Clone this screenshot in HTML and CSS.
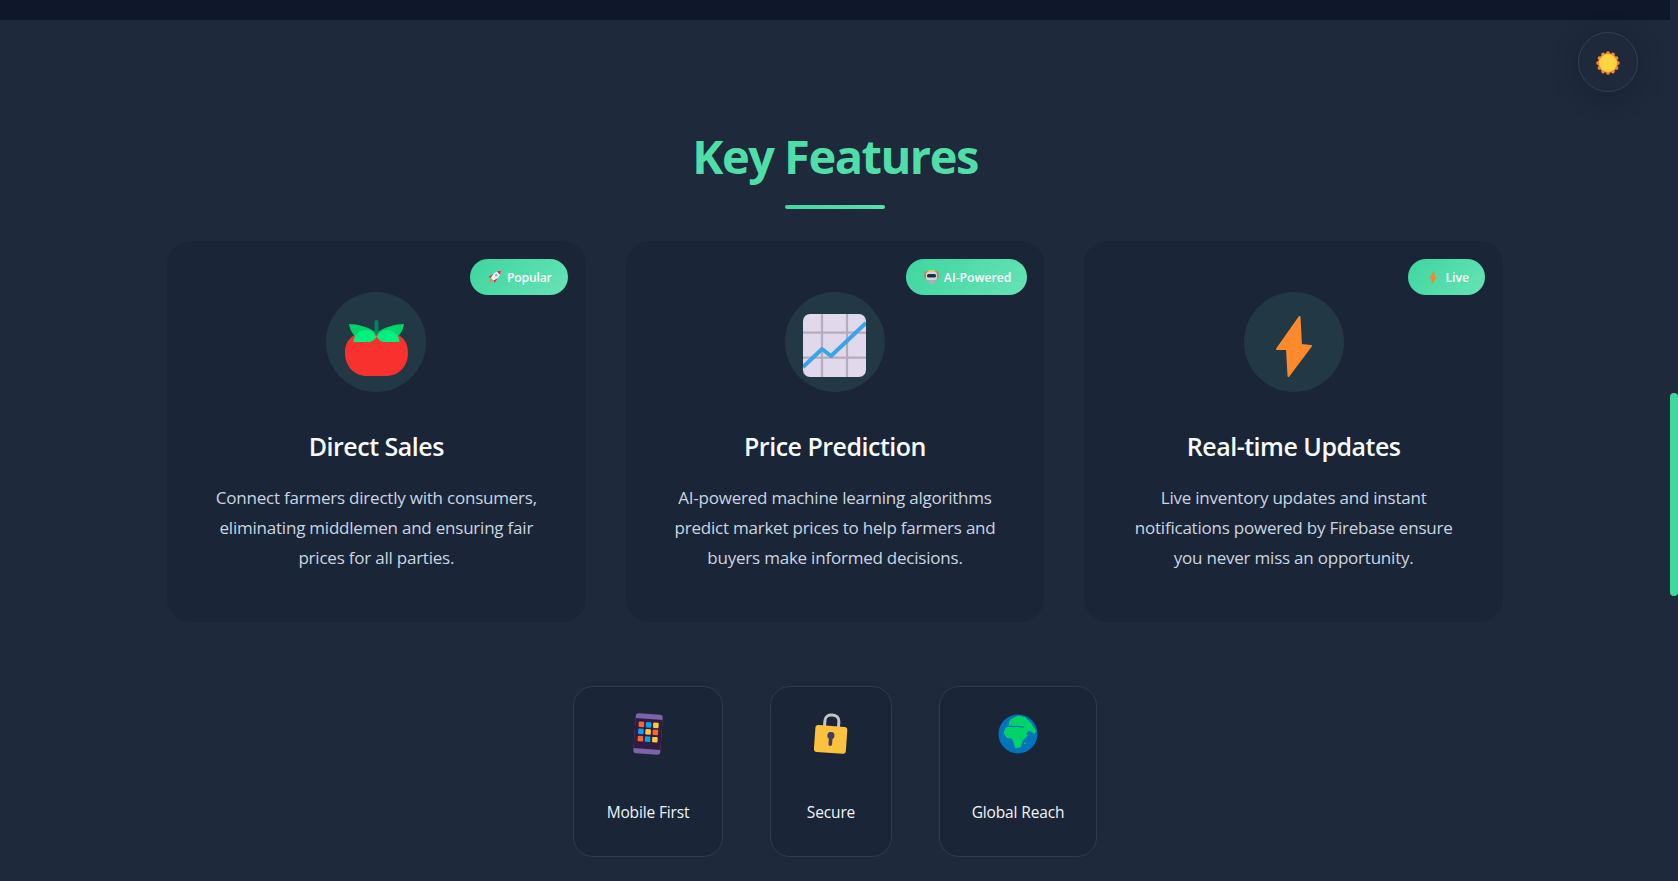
FILE: index.html
```html
<!DOCTYPE html>
<html lang="en">
<head>
<meta charset="utf-8">
<title>Key Features</title>
<link rel="stylesheet" href="styles.css">
</head>
<body>
<div class="topbar"></div>
<main class="features">
  <h2 class="title">Key Features</h2>
  <div class="underline"></div>
  <div class="cards">
    <article class="card">
      <span class="badge badge-pop">
        <svg class="badge-icon" viewBox="0 0 14 14"><path d="M3.500 8.500L0.500 13.500L5.500 10.500Z" fill="#ff822d"/><path d="M1 7L5.500 4L5.500 8.500Z M5.500 8.500L10 8.500L7 13Z" fill="#e0244c"/><path d="M3.500 8C5 4 8 1.200 13.500 0.500C13 6 10 9 6 10.500Z" fill="#f1eff5"/><path d="M9.300 1.400L13.500 0.500L12.600 4.700Z" fill="#e0244c"/><circle cx="8.800" cy="5.200" r="1.300" fill="#7fb3e8"/></svg>
        Popular
      </span>
      <div class="icon-circle">
        <svg class="icon-tomato" viewBox="0 0 67 60">
          <path d="M33.500 15C20 11 2 14 2 34C2 48 12 57 24 57H43C55 57 65 48 65 34C65 14 47 11 33.500 15Z" fill="#f8312f"/>
          <path d="M6 5C14 5 26 8 33.500 14C28 20 20 21 15 19C10 17 7 11 6 5Z" fill="#00d26a"/>
          <path d="M61 5C53 5 41 8 33.500 14C39 20 47 21 52 19C57 17 60 11 61 5Z" fill="#00d26a"/>
          <rect x="31.500" y="1" width="4" height="14" rx="2" fill="#008463"/>
          <path d="M10.300 23C11 16 16 11 23 11C28 11 31 14 33.500 18C31 21 29 23 26 23Z" fill="#00f080"/>
          <path d="M56.700 23C56 16 51 11 44 11C39 11 36 14 33.500 18C36 21 38 23 41 23Z" fill="#00f080"/>
        </svg>
      </div>
      <h3 class="card-title">Direct Sales</h3>
      <p class="card-text">Connect farmers directly with consumers, eliminating middlemen and ensuring fair prices for all parties.</p>
    </article>
    <article class="card">
      <span class="badge badge-ai">
        <svg class="badge-icon" viewBox="0 0 15 14"><rect x="0.500" y="1.500" width="3" height="7" fill="#d9734a"/><rect x="11.500" y="1.500" width="3" height="7" fill="#d9734a"/><rect x="4.500" y="0" width="6" height="2.500" fill="#f5c04a"/><rect x="2" y="2" width="11" height="8" rx="2" fill="#d6d3dc"/><rect x="3" y="4" width="9" height="3.500" rx="1.500" fill="#1c2f48"/><rect x="4.500" y="10" width="6" height="4" rx="1" fill="#b4acbc"/></svg>
        AI-Powered
      </span>
      <div class="icon-circle">
        <svg class="icon-chart" viewBox="0 0 63 63">
          <rect width="63" height="63" rx="7" fill="#e1d8ec"/>
          <path d="M19 0V63M44 0V63M0 18.700H63M0 43.700H63" stroke="#b4acbc" stroke-width="2.200" fill="none"/>
          <path d="M0 53L19 35L28 42L63 9" stroke="#38a5e8" stroke-width="4" fill="none" stroke-linejoin="round"/>
        </svg>
      </div>
      <h3 class="card-title">Price Prediction</h3>
      <p class="card-text">AI-powered machine learning algorithms predict market prices to help farmers and buyers make informed decisions.</p>
    </article>
    <article class="card">
      <span class="badge">
        <svg class="badge-icon-bolt" viewBox="0 0 36 61"><path d="M23.500 1L25 29L35 30L12.500 60L11 33L1 33Z" fill="#ff822d" stroke="#ff822d" stroke-width="2" stroke-linejoin="round"/></svg>
        Live
      </span>
      <div class="icon-circle">
        <svg class="icon-bolt" viewBox="0 0 36 61"><path d="M23.500 1L25 29L35 30L12.500 60L11 33L1 33Z" fill="#ff8a2c" stroke="#ff8a2c" stroke-width="2" stroke-linejoin="round"/></svg>
      </div>
      <h3 class="card-title">Real-time Updates</h3>
      <p class="card-text">Live inventory updates and instant notifications powered by Firebase ensure you never miss an opportunity.</p>
    </article>
  </div>
  <div class="minis">
    <div class="mini mini-mobile">
      <svg class="mini-icon" viewBox="0 0 40 44">
        <g transform="rotate(4 20 22)">
          <rect x="6.500" y="2" width="27" height="40" rx="3" fill="#7a64a8"/>
          <rect x="6.500" y="7" width="27" height="30" fill="#321b41"/>
          <rect x="10" y="10" width="5.500" height="5.500" rx="1" fill="#ff6723"/><rect x="17.200" y="10" width="5.500" height="5.500" rx="1" fill="#00a6ed"/><rect x="24.500" y="10" width="5.500" height="5.500" rx="1" fill="#ffc83d"/>
          <rect x="10" y="17.200" width="5.500" height="5.500" rx="1" fill="#00a6ed"/><rect x="17.200" y="17.200" width="5.500" height="5.500" rx="1" fill="#ffc83d"/><rect x="24.500" y="17.200" width="5.500" height="5.500" rx="1" fill="#ff6723"/>
          <rect x="10" y="24.500" width="5.500" height="5.500" rx="1" fill="#ff6723"/><rect x="17.200" y="24.500" width="5.500" height="5.500" rx="1" fill="#00a6ed"/><rect x="24.500" y="24.500" width="5.500" height="5.500" rx="1" fill="#ffc83d"/>
        </g>
      </svg>
      <span class="mini-label">Mobile First</span>
    </div>
    <div class="mini mini-secure">
      <svg class="mini-icon" viewBox="0 0 40 44">
        <g transform="rotate(4 20 22)">
          <path d="M13 16V9C13 5 16 3 20 3C24 3 27 5 27 9V16" fill="none" stroke="#c4c4c8" stroke-width="3"/>
          <rect x="4" y="14" width="32" height="27" rx="3" fill="#fcc23e"/>
          <circle cx="20" cy="23.500" r="3.600" fill="#433b6b"/>
          <rect x="18.200" y="24" width="3.600" height="10" rx="1.800" fill="#433b6b"/>
        </g>
      </svg>
      <span class="mini-label">Secure</span>
    </div>
    <div class="mini mini-global">
      <svg class="mini-icon" viewBox="0 0 40 44">
        <circle cx="20" cy="22" r="19.500" fill="#0074ba"/>
        <g transform="translate(0 2)">
          <path d="M13 5L20 1.500L27 3L33 9L38 17L36.500 20L33 17.500L31 17L28 20L30 21L24.500 27L23 33L17.500 34.500L14.500 26L13.500 24.500L9 24L5.500 19L7.500 14L11 11L11 8Z" fill="#00d26a"/>
          <path d="M8 13C12 11 14 13 17 12.500C20 12 22 13 26 13" fill="none" stroke="#0074ba" stroke-width="1.200"/>
          <circle cx="27" cy="29.300" r="0.900" fill="#00d26a"/>
        </g>
      </svg>
      <span class="mini-label">Global Reach</span>
    </div>
  </div>
</main>
<button class="theme-toggle" type="button" aria-label="Toggle theme">
  <svg class="sun" viewBox="0 0 24 24">
    <g fill="#ff822d">
      <circle cx="12" cy="12" r="10"/>
      <circle cx="21.800" cy="12" r="1.900"/><circle cx="20.490" cy="16.900" r="1.900"/><circle cx="16.900" cy="20.490" r="1.900"/>
      <circle cx="12" cy="21.800" r="1.900"/><circle cx="7.100" cy="20.490" r="1.900"/><circle cx="3.510" cy="16.900" r="1.900"/>
      <circle cx="2.200" cy="12" r="1.900"/><circle cx="3.510" cy="7.100" r="1.900"/><circle cx="7.100" cy="3.510" r="1.900"/>
      <circle cx="12" cy="2.200" r="1.900"/><circle cx="16.900" cy="3.510" r="1.900"/><circle cx="20.490" cy="7.100" r="1.900"/>
    </g>
    <circle cx="12" cy="12" r="9" fill="#fcd53f"/>
  </svg>
</button>
<div class="scroll-thumb"></div>
</body>
</html>
```
FILE: styles.css
```css
* { box-sizing: border-box; }
html, body { margin: 0; height: 881px; overflow: hidden; }
body {
  background: #1e293b;
  font-family: "Open Sans", "Noto Sans", sans-serif;
  color: #fff;
}
.topbar { height: 20px; margin-right: 8px; background: #0f172a; }
.features { width: 1336px; margin-left: 167px; padding-top: 103px; }
.title {
  margin: 0;
  font-size: 47px;
  line-height: 66px;
  font-weight: 700;
  text-align: center;
  color: #4fdea7;
  letter-spacing: -1.500px;
}
.underline {
  width: 100px;
  height: 4px;
  margin: 16px auto 32px;
  border-radius: 2px;
  background: linear-gradient(90deg, #3fd9a0, #58e0ac);
}
.cards { display: grid; grid-template-columns: repeat(3, 1fr); gap: 40px; }
.card {
  position: relative;
  height: 381px;
  padding: 51px 40px 0;
  border-radius: 24px;
  background: #1a2537;
  text-align: center;
}
.badge {
  position: absolute;
  top: 18px;
  right: 18px;
  display: flex;
  align-items: center;
  gap: 5px;
  height: 36px;
  padding: 0 16px 0 18px;
  border-radius: 18px;
  background: linear-gradient(135deg, #3dd69f, #68e3b6);
  font-size: 12.200px;
  font-weight: 600;
  color: #fff;
}
.badge-pop { letter-spacing: -0.200px; padding-left: 17px; }
.badge-ai { right: 17px; }
.badge-icon { width: 15px; height: 14px; }
.badge-icon-bolt { width: 8px; height: 13px; margin: 0 3px; }
.icon-circle {
  display: flex;
  align-items: center;
  justify-content: center;
  width: 100px;
  height: 100px;
  margin: 0 auto;
  border-radius: 50%;
  background: #233845;
}
.icon-tomato { width: 67px; height: 60px; margin-top: 14px; }
.icon-chart { width: 63px; height: 63px; margin-top: 7px; }
.icon-bolt { width: 36px; height: 61px; margin-top: 9px; }
.card-title {
  margin: 35px 0 0;
  font-size: 25px;
  line-height: 38px;
  font-weight: 600;
  color: #f8fafc;
  letter-spacing: -0.500px;
}
.card-text {
  margin: 18px 0 0;
  font-size: 17px;
  line-height: 30px;
  color: #cbd5e1;
  letter-spacing: -0.220px;
}
.minis {
  display: flex;
  justify-content: center;
  gap: 47px;
  margin-top: 64px;
}
.mini {
  display: flex;
  flex-direction: column;
  align-items: center;
  height: 171px;
  padding-top: 26px;
  border: 1px solid #2f3b4e;
  border-radius: 20px;
  background: #1a2537;
}
.mini-mobile { width: 150px; }
.mini-secure { width: 122px; }
.mini-global { width: 158px; }
.mini-icon { width: 40px; height: 44px; margin-top: -1px; }
.mini-label {
  margin-top: 44px;
  font-size: 15.500px;
  line-height: 24px;
  color: #f1f5f9;
  letter-spacing: -0.150px;
}
.theme-toggle {
  position: fixed;
  top: 32px;
  left: 1578px;
  display: flex;
  align-items: center;
  justify-content: center;
  width: 60px;
  height: 60px;
  padding: 0;
  border: 1px solid #334155;
  border-radius: 50%;
  background: #1e293b;
  box-shadow: 0 4px 24px rgba(15, 23, 42, 0.35);
}
.sun { width: 24px; height: 24px; margin-top: 2px; }
.scroll-thumb {
  position: fixed;
  top: 393px;
  left: 1670px;
  width: 8px;
  height: 203px;
  border-radius: 4px;
  background: #3fd9a0;
}
```
